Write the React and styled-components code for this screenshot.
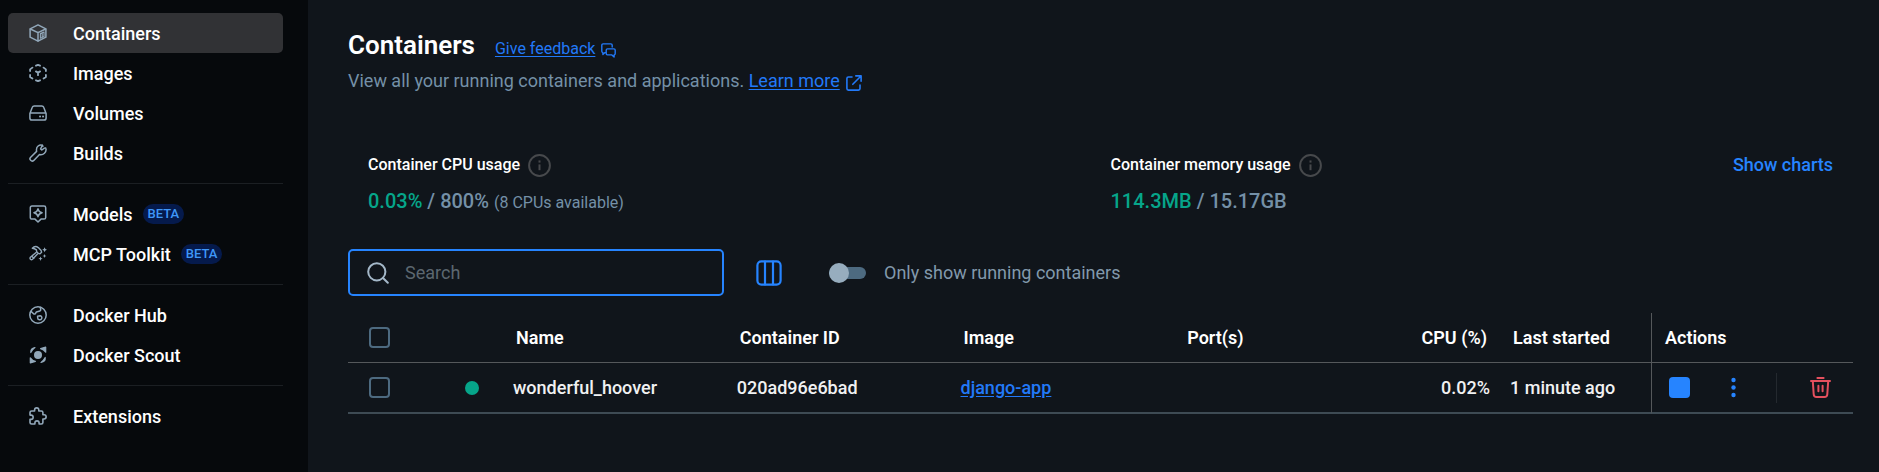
import React, { useState } from "react";
import styled, { createGlobalStyle, ThemeProvider } from "styled-components";

const theme = {
  sidebar: "#06090c",
  page: "#10151b",
  active: "#313235",
  rule: "#1b1f23",
  line: "#55585b",
  text: "#ffffff",
  muted: "#7490a7",
  icon: "#92a8ba",
  box: "#4d6a80",
  blue: "#2684ff",
  link: "#2279f8",
  green: "#06a58a",
  red: "#e4505e",
  info: "#47494c",
};

const GlobalStyle = createGlobalStyle`
  *, *::before, *::after { box-sizing: border-box; }
  body {
    margin: 0;
    background: ${theme.page};
    color: ${theme.text};
    font-family: Roboto, "Liberation Sans", sans-serif;
    font-size: 18px;
    line-height: 24px;
  }
  button, input { font: inherit; }
`;

/* ---------- layout ---------- */

const Shell = styled.div`
  display: flex;
  min-height: 100vh;
`;

const Sidebar = styled.nav`
  flex: 0 0 308px;
  padding: 13px 25px 13px 8px;
  background: ${(p) => p.theme.sidebar};
`;

const NavGroup = styled.ul`
  list-style: none;
  margin: 0;
  padding: 0;

  & + & {
    margin-top: 10px;
    padding-top: 10px;
    border-top: 1px solid ${(p) => p.theme.rule};
  }
`;

const NavLink = styled.a`
  display: flex;
  align-items: center;
  height: 40px;
  padding-left: 21px;
  border-radius: 5px;
  color: ${(p) => p.theme.text};
  font-weight: 500;
  text-decoration: none;
  background: ${(p) => (p.$active ? p.theme.active : "transparent")};

  svg {
    flex: none;
    margin-right: 26px;
    color: ${(p) => p.theme.icon};
  }
`;

const NavLabel = styled.span`
  padding-top: 2px;
`;

const Beta = styled.span`
  margin-left: 10px;
  padding: 0 5px;
  border-radius: 10px;
  background: #051a4c;
  color: #3f97f8;
  font-size: 13px;
  line-height: 20px;
`;

const Main = styled.main`
  flex: 1;
  min-width: 0;
  padding: 29px 26px 24px 40px;
`;

/* ---------- header ---------- */

const TitleRow = styled.div`
  display: flex;
  align-items: baseline;
  gap: 20px;
`;

const Title = styled.h1`
  margin: 0;
  font-size: 26px;
  line-height: 32px;
  font-weight: 600;
`;

const TextLink = styled.a`
  color: ${(p) => p.theme.link};
  font-size: ${(p) => (p.$small ? "16px" : "18px")};
  text-underline-offset: 2px;

  svg {
    margin-left: 6px;
    vertical-align: -4px;
  }
`;

const Subtitle = styled.p`
  margin: 8px 0 0;
  color: ${(p) => p.theme.muted};
`;

/* ---------- usage ---------- */

const Stats = styled.section`
  display: grid;
  grid-template-columns: 1fr 1fr;
  gap: 20px;
  margin-top: 60px;
  padding: 0 20px;
`;

const StatCell = styled.div`
  display: flex;
  justify-content: space-between;
  align-items: flex-start;
`;

const StatLabel = styled.div`
  display: flex;
  align-items: center;
  gap: 8px;
  font-size: 16px;
  font-weight: 500;

  svg {
    color: ${(p) => p.theme.info};
  }
`;

const StatValue = styled.div`
  margin-top: 12px;
  color: ${(p) => p.theme.muted};
  font-size: 20px;
  font-weight: 500;

  strong {
    color: ${(p) => p.theme.green};
    font-weight: 500;
  }

  small {
    font-size: 16px;
    font-weight: 400;
  }
`;

const TextButton = styled.button`
  padding: 0;
  border: 0;
  background: none;
  color: ${(p) => p.theme.blue};
  font-weight: 500;
  cursor: pointer;
`;

/* ---------- toolbar ---------- */

const Toolbar = styled.div`
  display: flex;
  align-items: center;
  margin-top: 34px;
`;

const SearchBox = styled.label`
  display: flex;
  align-items: center;
  gap: 16px;
  width: 376px;
  height: 47px;
  padding: 0 17px;
  border: 2px solid ${(p) => p.theme.blue};
  border-radius: 5px;
  color: #a4b8c9;
`;

const SearchInput = styled.input`
  flex: 1;
  min-width: 0;
  padding: 0;
  border: 0;
  outline: 0;
  background: none;
  color: ${(p) => p.theme.text};

  &::placeholder {
    color: #5c6770;
    opacity: 1;
  }
`;

const IconButton = styled.button`
  display: inline-flex;
  align-items: center;
  justify-content: center;
  padding: 0;
  border: 0;
  background: none;
  color: ${(p) => (p.$danger ? p.theme.red : p.theme.blue)};
  cursor: pointer;
`;

const ColumnsButton = styled(IconButton)`
  margin: 0 47px 0 32px;
`;

const SwitchLabel = styled.label`
  display: flex;
  align-items: center;
  gap: 18px;
  color: #8299ac;
`;

const Switch = styled.input`
  appearance: none;
  display: flex;
  align-items: center;
  justify-content: ${(p) => (p.checked ? "flex-end" : "flex-start")};
  width: 37px;
  height: 12px;
  margin: 0;
  border-radius: 6px;
  background: ${(p) => p.theme.box};

  &::before {
    content: "";
    flex: none;
    width: 20px;
    height: 20px;
    border-radius: 50%;
    background: #97adbe;
  }
`;

/* ---------- table ---------- */

const Table = styled.table`
  width: 100%;
  margin-top: 17px;
  table-layout: fixed;
  border-collapse: separate;
  border-spacing: 0;
`;

const Col = styled.col`
  width: ${(p) => p.$width || "auto"};
`;

const HeadCell = styled.th`
  height: 50px;
  padding: 0 13px;
  border-bottom: 1px solid ${(p) => p.theme.line};
  border-left: ${(p) => (p.$divided ? `1px solid ${p.theme.line}` : 0)};
  font-weight: 600;
  text-align: ${(p) => p.$align || "left"};
  white-space: nowrap;
`;

const Cell = styled.td`
  height: 51px;
  padding: 0 ${(p) => p.$pad || "10px"};
  border-bottom: 2px solid #3e4b54;
  border-left: ${(p) => (p.$divided ? `1px solid ${p.theme.line}` : 0)};
  color: #f0f1f2;
  font-weight: 500;
  text-align: ${(p) => p.$align || "left"};
  white-space: nowrap;
`;

const Checkbox = styled.input`
  appearance: none;
  display: block;
  width: 21px;
  height: 21px;
  margin: 0 auto;
  border: 2px solid ${(p) => p.theme.box};
  border-radius: 4px;

  &:checked {
    background: ${(p) => p.theme.blue};
  }
`;

const StatusDot = styled.span`
  display: block;
  width: 14px;
  height: 14px;
  margin-left: auto;
  border-radius: 50%;
  background: ${(p) => p.theme.green};
`;

const Actions = styled.div`
  display: flex;
  align-items: center;
  justify-content: space-between;
`;

const ActionDivider = styled.span`
  width: 1px;
  height: 30px;
  background: #24292f;
`;

/* ---------- icons ---------- */

const Svg = ({ size = 18, box = 18, sw = 1.5, children }) => (
  <svg
    width={size}
    height={size}
    viewBox={`0 0 ${box} ${box}`}
    fill="none"
    stroke="currentColor"
    strokeWidth={sw}
    strokeLinecap="round"
    strokeLinejoin="round"
    aria-hidden="true"
  >
    {children}
  </svg>
);

const ContainerIcon = () => (
  <Svg>
    <path d="M9 .9 16.9 4.9V13.2L9 17.1 1.1 13.2V4.9Z" />
    <path d="M1.3 5 9 8.6 16.7 5M9 8.6V17" />
    <path d="M11.4 9.6 15 8V12.4L11.4 14.2ZM13.2 9V13" strokeWidth="1.1" />
  </Svg>
);

const ImagesIcon = () => (
  <Svg sw={1.8}>
    <path d="M7 1.7 9 .9 11 1.7M7 16.3 9 17.1 11 16.3M1.1 7V5.4L3.4 3.6M16.9 7V5.4L14.6 3.6M1.1 11V13L3.4 14.6M16.9 11V13L14.6 14.6" />
    <path d="M6.9 7.4 9 8.6 11.1 7.4M9 8.6V11.2" />
  </Svg>
);

const VolumesIcon = () => (
  <Svg>
    <path d="M.9 9.4 3.3 3.3Q3.8 1.9 5.2 1.9H12.8Q14.2 1.9 14.7 3.3L17.1 9.4V14Q17.1 16.1 15 16.1H3Q.9 16.1 .9 14ZM1.2 8.9H16.8" />
    <path d="M11 12.5H11.1M14 12.5H14.1" strokeWidth="1.9" />
  </Svg>
);

const BuildsIcon = () => (
  <Svg>
    <path d="M15.4 4.1 12.8 6 11.6 4.9 13.4 1.3C10.4.2 7 2.6 7.5 6.5L7.6 7.4 1.7 13.2A2.2 2.2 0 0 0 4.8 16.4L10.5 10.5C14.4 11.4 17.6 8.2 17 4.9Q16.8 3.4 15.4 4.1Z" />
    <path d="M13.4 1.4 13.9 2.3" />
  </Svg>
);

const ModelsIcon = () => (
  <Svg>
    <path d="M3 1H15Q16.7 1 16.7 2.7V12.4Q16.7 14.1 15 14.1H12L9 17 6 14.1H3Q1.3 14.1 1.3 12.4V2.7Q1.3 1 3 1Z" />
    <path d="M9 3.8Q9.7 7 13.1 7.7 9.7 8.4 9 11.7 8.3 8.4 4.9 7.7 8.3 7 9 3.8Z" />
  </Svg>
);

const ToolkitIcon = () => (
  <Svg sw={1.4}>
    <path d="M3.3 3.3C5 1.4 7.6 1.3 9.3 2.6L12.1 5.4 12.6 7.3 11 8.8 9.2 8.3 7.7 6.7 7.4 4.9Q5.6 3.4 3.3 3.3Z" />
    <path d="M7.1 7.5 1.4 12.2Q.6 13.3 1.5 14.3 2.5 15.1 3.5 14.2L8.5 8.9M3.3 11.7 4.9 13.2" />
    <path
      fill="currentColor"
      stroke="none"
      d="M15.6 2.2 16.4 4 18 4.7 16.4 5.5 15.6 7.2 14.8 5.5 13.2 4.7 14.8 4ZM15.5 9 16.1 10.4 17.5 11 16.1 11.6 15.5 13 14.9 11.6 13.5 11 14.9 10.4ZM11.5 11.5 12.1 13.1 13.6 13.7 12.1 14.3 11.5 15.9 10.9 14.3 9.4 13.7 10.9 13.1Z"
    />
  </Svg>
);

const HubIcon = () => (
  <Svg>
    <circle cx="9" cy="9" r="8.2" />
    <path d="M2 5.4 4.6 7.8Q5.6 8.4 6.5 7.4L7.4 6 10.8 5.1Q11.9 4.6 11.7 3.4L11.2 1.2M8.6 10.2 11.2 9.8Q13.4 10.4 12.7 12.4 12.1 14 10.3 13.8 8.7 13.5 8.7 12Z" />
  </Svg>
);

const ScoutIcon = () => (
  <Svg sw={1.2}>
    <circle cx="9" cy="9" r="4" fill="currentColor" stroke="none" />
    <path
      fill="currentColor"
      d="M16.7 1.2V6.2Q14.8 3.6 11.6 2.6ZM1.3 16.8V11.8Q3.2 14.6 6.4 15.4ZM1.8 6.5Q1.4 2.4 6 1.6 3.5 3.3 1.8 6.5ZM16.2 11.5Q16.6 15.6 12 16.4 14.5 14.7 16.2 11.5Z"
    />
  </Svg>
);

const ExtensionsIcon = () => (
  <Svg sw={1.6}>
    <path d="M5.6 4V3A2.1 2.1 0 0 1 9.8 3V4H12.3Q13.9 4 13.9 5.6V7.7H15A2 2 0 0 1 15 12H13.9V15.4Q13.9 17 12.3 17H10.1V16A2 2 0 0 0 5.9 16V17H2.6Q1 17 1 15.4V12.4H2A2 2 0 0 0 2 8.1H1V5.6Q1 4 2.6 4Z" />
  </Svg>
);

const FeedbackIcon = () => (
  <Svg size={15} box={15} sw={1.4}>
    <path d="M4.6 9.6H4L1.9 11.6V9.6Q.8 9.4.8 8.3V2.2Q.8.9 2.1.9H9.9Q11.2.9 11.2 2.2V4" />
    <path d="M6.5 5.9H12.9Q14.2 5.9 14.2 7.2V10.6Q14.2 11.9 13.1 11.9V14.1L10.9 11.9H6.5Q5.2 11.9 5.2 10.6V7.2Q5.2 5.9 6.5 5.9Z" />
  </Svg>
);

const ExternalIcon = () => (
  <Svg size={16} box={16} sw={1.6}>
    <path d="M6 2H2.4Q.9 2 .9 3.5V13.6Q.9 15.1 2.4 15.1H12.5Q14 15.1 14 13.6V10M9.8.9H15.1V6.2M15 1 6.8 9.3" />
  </Svg>
);

const InfoIcon = () => (
  <Svg size={23} box={23} sw={2}>
    <circle cx="11.5" cy="11.5" r="10.4" />
    <path d="M11.5 10.4V16.2" strokeLinecap="butt" />
    <path d="M11.5 6.4V8.6" strokeLinecap="butt" />
  </Svg>
);

const SearchIcon = () => (
  <Svg size={22} box={22} sw={2}>
    <circle cx="9.8" cy="9.8" r="8.6" />
    <path d="M16 16 20.8 20.8" />
  </Svg>
);

const ColumnsIcon = () => (
  <Svg size={26} box={26} sw={2.2}>
    <rect x="1.4" y="1.4" width="23.2" height="23.2" rx="4" />
    <path d="M9 1.5V24.5M17 1.5V24.5" />
  </Svg>
);

const StopIcon = () => (
  <Svg size={21} box={21}>
    <rect width="21" height="21" rx="4" fill="currentColor" stroke="none" />
  </Svg>
);

const MoreIcon = () => (
  <Svg size={21} box={21}>
    <g fill="currentColor" stroke="none">
      <circle cx="10.5" cy="3" r="2.2" />
      <circle cx="10.5" cy="10.5" r="2.2" />
      <circle cx="10.5" cy="18" r="2.2" />
    </g>
  </Svg>
);

const TrashIcon = () => (
  <Svg size={21} box={21} sw={2}>
    <path d="M1 4H20M7.4 1H13.6M2.8 4.2 3.7 17.2Q3.9 20 6.5 20H14.5Q17.1 20 17.3 17.2L18.2 4.2M8.4 8.7V14.3M12.6 8.7V14.3" />
  </Svg>
);

/* ---------- content ---------- */

const NAV = [
  [
    { label: "Containers", Icon: ContainerIcon, active: true },
    { label: "Images", Icon: ImagesIcon },
    { label: "Volumes", Icon: VolumesIcon },
    { label: "Builds", Icon: BuildsIcon },
  ],
  [
    { label: "Models", Icon: ModelsIcon, beta: true },
    { label: "MCP Toolkit", Icon: ToolkitIcon, beta: true },
  ],
  [
    { label: "Docker Hub", Icon: HubIcon },
    { label: "Docker Scout", Icon: ScoutIcon },
  ],
  [{ label: "Extensions", Icon: ExtensionsIcon }],
];

const ROWS = [
  { name: "wonderful_hoover", id: "020ad96e6bad", image: "django-app", ports: "", cpu: "0.02%", started: "1 minute ago" },
];

export default function App() {
  const [query, setQuery] = useState("");
  const [running, setRunning] = useState(false);

  return (
    <ThemeProvider theme={theme}>
      <GlobalStyle />
      <Shell>
        <Sidebar>
          {NAV.map((group, i) => (
            <NavGroup key={i}>
              {group.map(({ label, Icon, active, beta }) => (
                <li key={label}>
                  <NavLink href="#" $active={active} aria-current={active ? "page" : undefined}>
                    <Icon />
                    <NavLabel>{label}</NavLabel>
                    {beta && <Beta>BETA</Beta>}
                  </NavLink>
                </li>
              ))}
            </NavGroup>
          ))}
        </Sidebar>

        <Main>
          <TitleRow>
            <Title>Containers</Title>
            <TextLink href="#" $small>
              Give feedback
              <FeedbackIcon />
            </TextLink>
          </TitleRow>
          <Subtitle>
            View all your running containers and applications.{" "}
            <TextLink href="#">
              Learn more
              <ExternalIcon />
            </TextLink>
          </Subtitle>

          <Stats>
            <StatCell>
              <div>
                <StatLabel>
                  Container CPU usage
                  <InfoIcon />
                </StatLabel>
                <StatValue>
                  <strong>0.03%</strong> / 800% <small>(8 CPUs available)</small>
                </StatValue>
              </div>
            </StatCell>
            <StatCell>
              <div>
                <StatLabel>
                  Container memory usage
                  <InfoIcon />
                </StatLabel>
                <StatValue>
                  <strong>114.3MB</strong> / 15.17GB
                </StatValue>
              </div>
              <TextButton type="button">Show charts</TextButton>
            </StatCell>
          </Stats>

          <Toolbar>
            <SearchBox>
              <SearchIcon />
              <SearchInput
                type="text"
                placeholder="Search"
                aria-label="Search"
                value={query}
                onChange={(e) => setQuery(e.target.value)}
              />
            </SearchBox>
            <ColumnsButton type="button" aria-label="Choose columns">
              <ColumnsIcon />
            </ColumnsButton>
            <SwitchLabel>
              <Switch type="checkbox" role="switch" checked={running} onChange={(e) => setRunning(e.target.checked)} />
              Only show running containers
            </SwitchLabel>
          </Toolbar>

          <Table>
            <colgroup>
              <Col $width="63px" />
              <Col $width="92px" />
              <Col />
              <Col />
              <Col />
              <Col />
              <Col $width="102px" />
              <Col $width="151px" />
              <Col $width="202px" />
            </colgroup>
            <thead>
              <tr>
                <HeadCell>
                  <Checkbox type="checkbox" aria-label="Select all containers" />
                </HeadCell>
                <HeadCell aria-label="Status" />
                <HeadCell>Name</HeadCell>
                <HeadCell>Container ID</HeadCell>
                <HeadCell>Image</HeadCell>
                <HeadCell>Port(s)</HeadCell>
                <HeadCell $align="right">CPU (%)</HeadCell>
                <HeadCell>Last started</HeadCell>
                <HeadCell $divided>Actions</HeadCell>
              </tr>
            </thead>
            <tbody>
              {ROWS.map((row) => (
                <tr key={row.id}>
                  <Cell>
                    <Checkbox type="checkbox" aria-label={`Select ${row.name}`} />
                  </Cell>
                  <Cell $pad="24px">
                    <StatusDot role="img" aria-label="Running" />
                  </Cell>
                  <Cell>{row.name}</Cell>
                  <Cell>{row.id}</Cell>
                  <Cell>
                    <TextLink href="#">{row.image}</TextLink>
                  </Cell>
                  <Cell>{row.ports}</Cell>
                  <Cell $align="right">{row.cpu}</Cell>
                  <Cell>{row.started}</Cell>
                  <Cell $divided $pad="22px 0 17px">
                    <Actions>
                      <IconButton type="button" aria-label="Stop">
                        <StopIcon />
                      </IconButton>
                      <IconButton type="button" aria-label="More actions">
                        <MoreIcon />
                      </IconButton>
                      <ActionDivider />
                      <IconButton type="button" $danger aria-label="Delete">
                        <TrashIcon />
                      </IconButton>
                    </Actions>
                  </Cell>
                </tr>
              ))}
            </tbody>
          </Table>
        </Main>
      </Shell>
    </ThemeProvider>
  );
}
